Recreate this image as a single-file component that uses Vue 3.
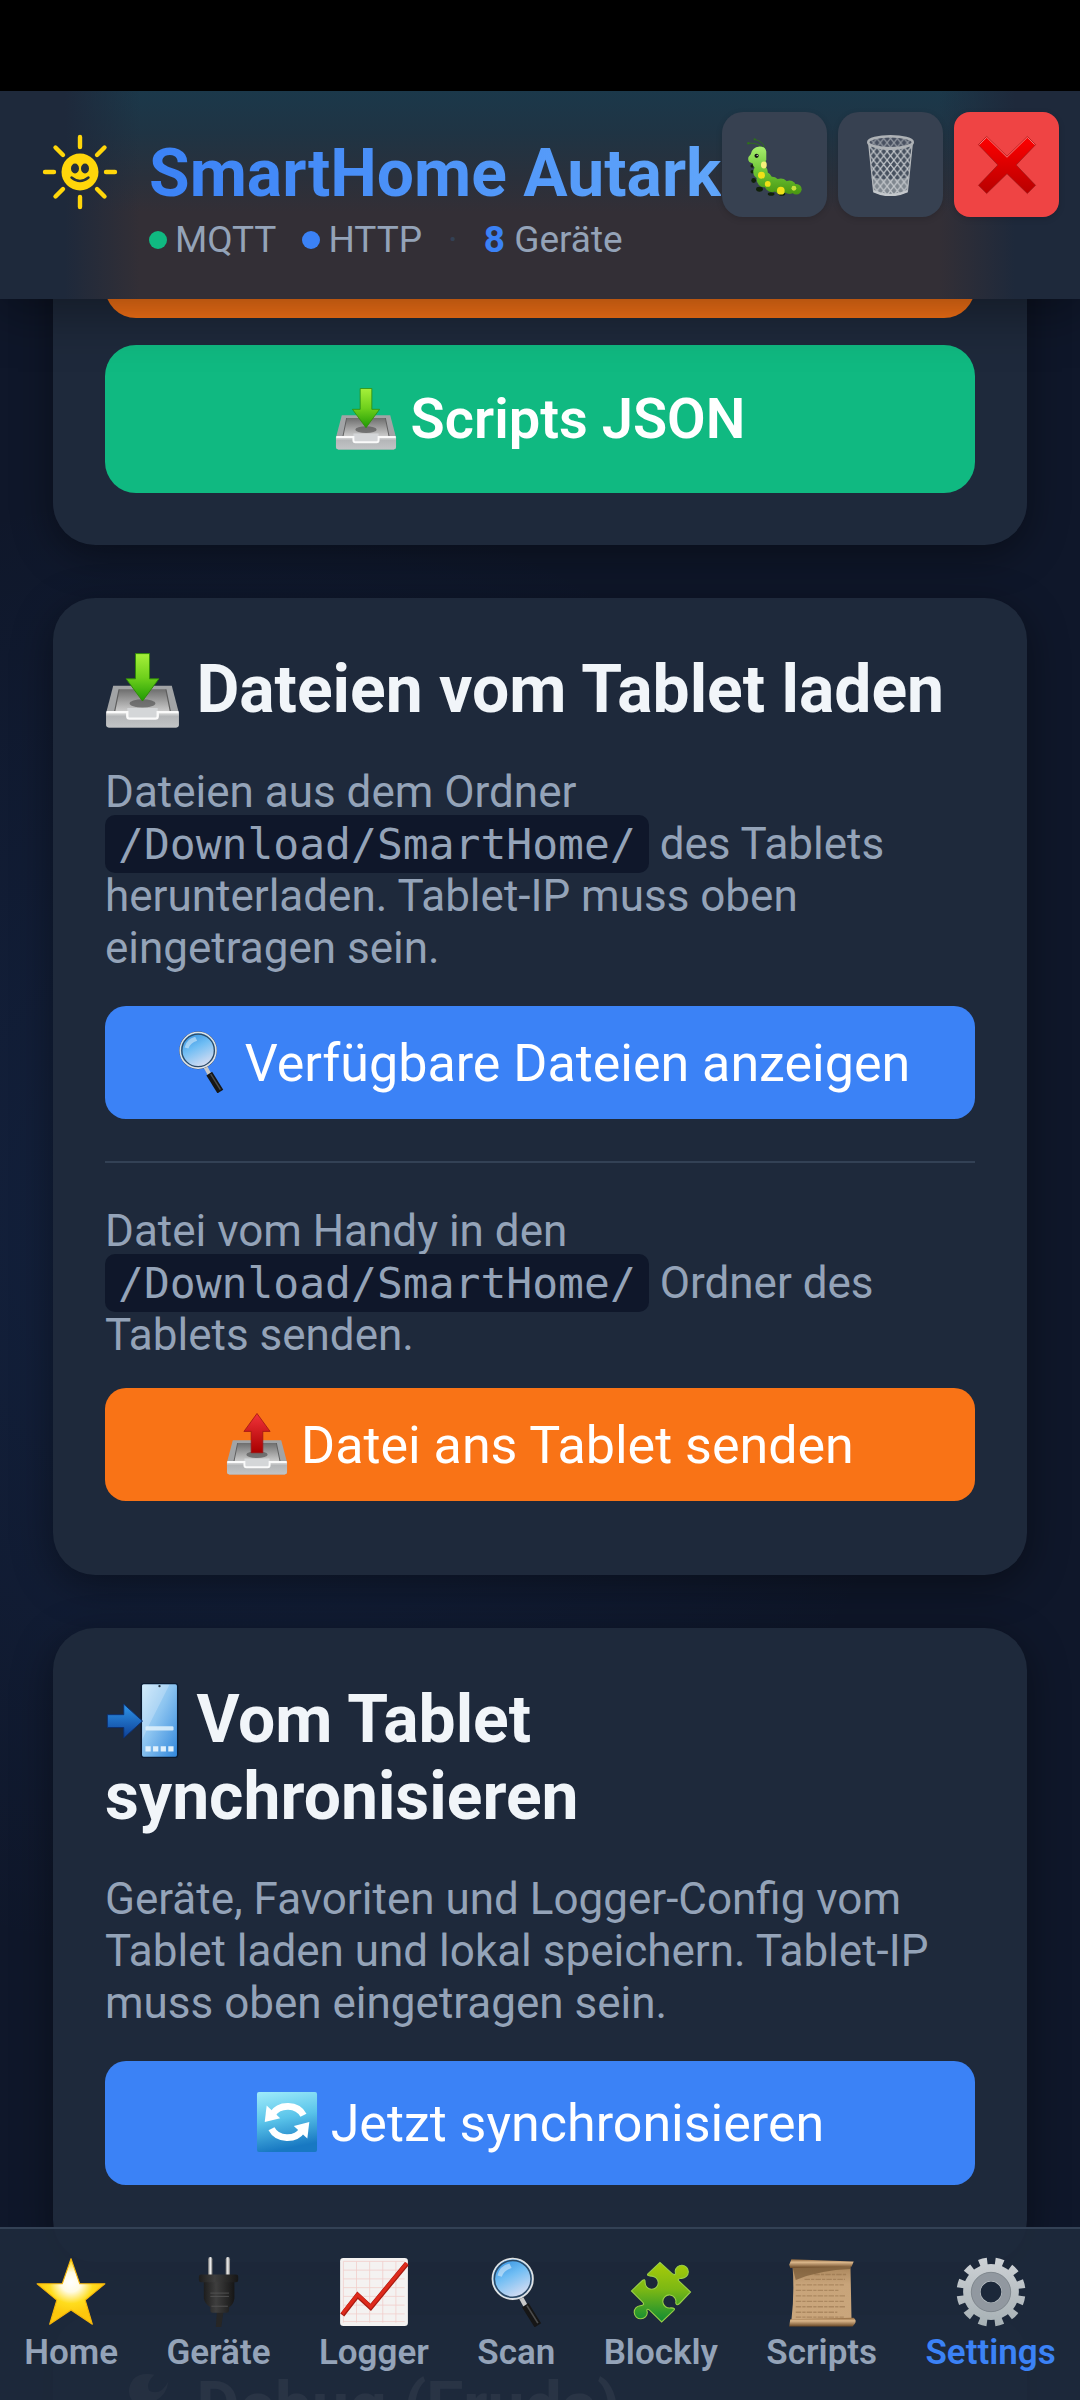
<template>
  <div class="app">
    <svg class="sprite" width="0" height="0" aria-hidden="true">
      <defs>
        <linearGradient id="g-green" x1="0" y1="0" x2="0" y2="1">
          <stop offset="0" stop-color="#a6f03a" />
          <stop offset="0.5" stop-color="#6fd01c" />
          <stop offset="1" stop-color="#1f9a05" />
        </linearGradient>
        <linearGradient id="g-red" x1="0" y1="0" x2="0" y2="1">
          <stop offset="0" stop-color="#f2343a" />
          <stop offset="1" stop-color="#a80000" />
        </linearGradient>
        <linearGradient id="g-cross" x1="0" y1="0" x2="0" y2="1">
          <stop offset="0" stop-color="#ff0000" />
          <stop offset="1" stop-color="#b80000" />
        </linearGradient>
        <linearGradient id="g-front" x1="0" y1="0" x2="0" y2="1">
          <stop offset="0" stop-color="#e8e8e8" />
          <stop offset="0.3" stop-color="#b4b6b8" />
          <stop offset="1" stop-color="#c2c4c6" />
        </linearGradient>
        <linearGradient id="g-inner" x1="0" y1="0" x2="0" y2="1">
          <stop offset="0" stop-color="#6e6e6e" />
          <stop offset="1" stop-color="#d2d2d2" />
        </linearGradient>
        <linearGradient id="g-lens" x1="0" y1="0" x2="0.5" y2="1">
          <stop offset="0" stop-color="#2486dc" />
          <stop offset="0.5" stop-color="#6fbdf4" />
          <stop offset="1" stop-color="#d3dcf2" />
        </linearGradient>
        <linearGradient id="g-phone" x1="0" y1="0" x2="1" y2="1">
          <stop offset="0" stop-color="#c8e6fa" />
          <stop offset="0.45" stop-color="#8cc4f0" />
          <stop offset="1" stop-color="#2f86dc" />
        </linearGradient>
        <linearGradient id="g-arrow" x1="0" y1="0" x2="0" y2="1">
          <stop offset="0" stop-color="#2f96ea" />
          <stop offset="1" stop-color="#0d3f96" />
        </linearGradient>
        <linearGradient id="g-sync" x1="0" y1="0" x2="0.2" y2="1">
          <stop offset="0" stop-color="#a0ecfa" />
          <stop offset="0.5" stop-color="#5ac4ea" />
          <stop offset="1" stop-color="#1878c2" />
        </linearGradient>
        <radialGradient id="g-star" cx="0.5" cy="0.36" r="0.5">
          <stop offset="0" stop-color="#ffffff" />
          <stop offset="0.3" stop-color="#fffbe4" />
          <stop offset="0.65" stop-color="#ffdd1e" />
          <stop offset="1" stop-color="#fdc70c" />
        </radialGradient>
        <linearGradient id="g-plug" x1="0" y1="0" x2="1" y2="0">
          <stop offset="0" stop-color="#1d1d1d" />
          <stop offset="0.4" stop-color="#3e3e3e" />
          <stop offset="1" stop-color="#161616" />
        </linearGradient>
        <linearGradient id="g-metal" x1="0" y1="0" x2="1" y2="0">
          <stop offset="0" stop-color="#7a7a7a" />
          <stop offset="0.5" stop-color="#f4f4f4" />
          <stop offset="1" stop-color="#6a6a6a" />
        </linearGradient>
        <linearGradient id="g-puzzle" x1="0.5" y1="0" x2="0.5" y2="1">
          <stop offset="0" stop-color="#a8cc08" />
          <stop offset="0.45" stop-color="#7cb814" />
          <stop offset="1" stop-color="#0f8c34" />
        </linearGradient>
        <linearGradient id="g-paper" x1="0" y1="0" x2="0" y2="1">
          <stop offset="0" stop-color="#a8845a" />
          <stop offset="0.35" stop-color="#c8a47a" />
          <stop offset="1" stop-color="#caa67c" />
        </linearGradient>
        <linearGradient id="g-roll" x1="0" y1="0" x2="0" y2="1">
          <stop offset="0" stop-color="#8a6238" />
          <stop offset="0.35" stop-color="#dcb88c" />
          <stop offset="1" stop-color="#6a4826" />
        </linearGradient>
        <linearGradient id="g-gear" gradientUnits="userSpaceOnUse" x1="0" y1="0" x2="0" y2="64">
          <stop offset="0" stop-color="#ced2d6" />
          <stop offset="1" stop-color="#a6b0b4" />
        </linearGradient>
        <linearGradient id="g-bug" gradientUnits="userSpaceOnUse" x1="0" y1="14" x2="0" y2="64">
          <stop offset="0" stop-color="#a6ec6c" />
          <stop offset="0.5" stop-color="#6cc434" />
          <stop offset="1" stop-color="#46920e" />
        </linearGradient>
        <pattern id="p-mesh" width="7" height="9" patternUnits="userSpaceOnUse">
          <path d="M0 0L7 9M7 0L0 9" stroke="#c4c8cc" stroke-width="1.3" />
        </pattern>
      </defs>

      <symbol id="tray" viewBox="0 0 64 64">
        <path d="M7 28H57L63 51V61Q63 63.500 60.500 63.500H3.500Q1 63.500 1 61V51Z" fill="#a2a4a6" />
        <path d="M12 31H52L56 51H8Z" fill="url(#g-inner)" />
        <path d="M12 31L8 51M52 31L56 51" stroke="#5e5e5e" stroke-width="1" />
        <ellipse cx="32" cy="43" rx="11" ry="3.500" fill="#555" opacity="0.7" />
        <path d="M1 50H19V54Q19 56 21 56H43Q45 56 45 54V50H63V61Q63 63.500 60.500 63.500H3.500Q1 63.500 1 61Z" fill="url(#g-front)" />
        <path d="M19 47H45V54Q45 56 43 56H21Q19 56 19 54Z" fill="#d4d6d8" />
        <path d="M1.500 50.500H19V54Q19 56 21 56H43Q45 56 45 54V50.500H62.500" fill="none" stroke="#fafafa" stroke-width="2" />
      </symbol>
      <symbol id="inbox" viewBox="0 0 64 64">
        <use href="#tray" />
        <path d="M26 0.500H38V22H46L32 41L18 22H26Z" fill="url(#g-green)" stroke="#2f8a08" stroke-width="0.8" />
      </symbol>
      <symbol id="outbox" viewBox="0 0 64 64">
        <use href="#tray" />
        <path d="M32 0.500L45.500 19H38V41H26V19H18.500Z" fill="url(#g-red)" stroke="#9c1414" stroke-width="0.8" />
      </symbol>
      <symbol id="search" viewBox="0 0 64 64">
        <path d="M36 36L42 47" stroke="#c8c8c8" stroke-width="4" />
        <path d="M40.500 44L52 62.500" stroke="#161616" stroke-width="7" />
        <path d="M42 44.500L52 60.500" stroke="#4c4c4c" stroke-width="1.500" />
        <circle cx="29" cy="20" r="19.500" fill="#3c4248" />
        <circle cx="29" cy="20" r="18.500" fill="url(#g-lens)" stroke="#dfe3e6" stroke-width="1.500" />
        <circle cx="29" cy="20" r="16.800" fill="none" stroke="#2c4a66" stroke-width="1.400" />
        <path d="M15 17Q17 8 26 6L28 10Q21 12 19 18Z" fill="#fff" opacity="0.45" />
      </symbol>
      <symbol id="phone" viewBox="0 0 64 64">
        <rect x="31" y="0.500" width="31" height="63" rx="2" fill="url(#g-phone)" stroke="#0b1a30" stroke-width="1.200" />
        <path d="M32 1.500H55L38 35L32 48Z" fill="#fff" opacity="0.22" />
        <circle cx="46.500" cy="2.600" r="1" fill="#234" />
        <rect x="34.500" y="37" width="24" height="3.500" rx="1" fill="#e2f2fc" opacity="0.85" />
        <path d="M34.500 54h4.500v4.500h-4.500zM41 54h4.500v4.500h-4.500zM47.500 54h4.500v4.500h-4.500zM54 54h4.500v4.500h-4.500z" fill="#dff0fc" />
        <path d="M2 27H16V18L32 32.500L16 47V38H2Z" fill="url(#g-arrow)" stroke="#0c2f70" stroke-width="0.8" />
      </symbol>
      <symbol id="sync" viewBox="0 0 64 64">
        <rect x="1" y="1" width="62" height="62" rx="2" fill="url(#g-sync)" />
        <g fill="none" stroke="#fff" stroke-width="7">
          <path d="M49 25A18 16 0 0 0 17 24" />
          <path d="M16 39A18 16 0 0 0 48 40" />
        </g>
        <path d="M11 15L9 32L25 28Z" fill="#fff" />
        <path d="M53 49L55 32L39 36Z" fill="#fff" />
      </symbol>
      <symbol id="bug" viewBox="0 0 64 64">
        <g fill="none" stroke="#2f6e1c" stroke-width="1">
          <path d="M21 14Q20 8 11 5.500" />
          <path d="M19 14Q15 9 4 9.500" />
        </g>
        <circle cx="11" cy="5.500" r="1.200" fill="#2f6e1c" />
        <circle cx="4.500" cy="9.500" r="1.300" fill="#2f6e1c" />
        <g fill="#10200a">
          <circle cx="8.500" cy="33" r="1.800" />
          <circle cx="8.500" cy="39" r="1.800" />
          <circle cx="10" cy="48" r="2.500" />
          <ellipse cx="16" cy="57" rx="3.500" ry="2.500" />
          <ellipse cx="28" cy="62" rx="3.500" ry="1.800" />
          <ellipse cx="39" cy="62" rx="3.500" ry="1.800" />
        </g>
        <g fill="url(#g-bug)">
          <circle cx="54" cy="57" r="5.500" />
          <circle cx="47" cy="55" r="7" />
          <circle cx="38" cy="54" r="8" />
          <circle cx="29" cy="52" r="8" />
          <circle cx="21" cy="47" r="8" />
          <circle cx="17" cy="39" r="7.500" />
          <circle cx="16" cy="30" r="7" />
          <path d="M23 18Q22 13 16 13Q8 14 7 21Q2.500 25 5.500 29Q10 32 16 30L23 27Z" />
        </g>
        <circle cx="13" cy="22.500" r="2.200" fill="#111" />
        <circle cx="13.600" cy="22" r="0.700" fill="#fff" />
        <g fill="#f0e018">
          <ellipse cx="20.500" cy="32" rx="3" ry="3.500" fill="#f6f07a" />
          <circle cx="18" cy="42.500" r="3.600" />
          <circle cx="24.500" cy="51.500" r="3" />
          <circle cx="38" cy="58.500" r="4" />
          <circle cx="51.500" cy="56" r="2.500" fill="#c8e03c" />
        </g>
      </symbol>
      <symbol id="bin" viewBox="0 0 64 64">
        <path d="M9 10L14 59Q31 67 49 59L54 10Z" fill="#8c949c" opacity="0.18" />
        <path d="M12 44L14 59Q31 67 49 59L51 44Q31 50 12 44Z" fill="#c6cacc" opacity="0.45" />
        <path d="M9 10L14 59Q31 67 49 59L54 10Q31 22 9 10Z" fill="url(#p-mesh)" stroke="#b4b8bc" stroke-width="1.200" />
        <ellipse cx="31.500" cy="8.500" rx="23" ry="6.200" fill="#485060" />
        <ellipse cx="31.500" cy="8.500" rx="23" ry="6.200" fill="url(#p-mesh)" opacity="0.6" />
        <ellipse cx="31.500" cy="8.500" rx="23" ry="6.200" fill="none" stroke="#aeb2b6" stroke-width="2.600" />
        <path d="M14 59Q31 67 49 59" fill="none" stroke="#c4c8cc" stroke-width="2.600" />
      </symbol>
      <symbol id="cross" viewBox="0 0 64 64">
        <path d="M11 2.500L32 23L53 2.500L61.500 11L41.500 32L61.500 53L53 61.500L32 41L11 61.500L2.500 53L22.500 32L2.500 11Z" fill="url(#g-cross)" stroke="#8e1a1a" stroke-width="0.600" />
        <path d="M3.500 11L11 3.500L32 24L53 3.500L60.500 11" fill="none" stroke="#ff9a9a" stroke-width="0.800" />
      </symbol>
      <symbol id="star" viewBox="0 0 64 64">
        <path d="M32 1.500L40 24.500H63L45 39.500L51.500 61.500L32 48.500L12.500 61.500L19 39.500L1 24.500H24Z" fill="url(#g-star)" stroke="#f6b60a" stroke-width="1" stroke-linejoin="round" />
      </symbol>
      <symbol id="plug" viewBox="0 0 64 64">
        <rect x="23" y="0" width="4" height="19" rx="2" fill="url(#g-metal)" />
        <rect x="39" y="0" width="4" height="19" rx="2" fill="url(#g-metal)" />
        <path d="M31 50H37L35 64H30Z" fill="#262626" />
        <path d="M19 22H47V38Q46 44 42 46V49Q42 51 40 51H27Q25 51 25 49V46Q20 43 19 38Z" fill="url(#g-plug)" />
        <rect x="14.500" y="16" width="36" height="7" rx="2" fill="url(#g-plug)" />
        <path d="M25 33H42M25 36H42M26 45H41" stroke="#555" stroke-width="0.800" />
      </symbol>
      <symbol id="chart" viewBox="0 0 64 64">
        <rect x="1" y="1" width="62" height="62" rx="3" fill="#f4f2f1" />
        <path d="M4 4H60M4 12H60M4 20H60M4 28H60M4 36H60M4 44H60M4 52H60M4 59H60M4 4V60M16 4V60M28 4V60M40 4V60M52 4V60" stroke="#f0cdc9" stroke-width="0.700" />
        <path d="M3 53L17 35L29 46L62 6" fill="none" stroke="#a81a10" stroke-width="4.600" />
        <path d="M3 52L17 34.500L29 45.500L62 5.500" fill="none" stroke="#de2a1c" stroke-width="3" />
      </symbol>
      <symbol id="puzzle" viewBox="0 0 64 64">
        <path d="M31 5L42 15Q46 18 45 13A6 6 0 1 1 51 19.500Q46 20 48.500 22L59 32L49 42.500Q46 45 45.500 42A6 6 0 1 0 41 46.500Q46 46.500 43.500 49L32.600 59.400L22 49Q18 46 19.500 50.500A6 6 0 1 1 13 44.500Q18 44 15 41L5 31L15 21.500Q17.500 19.500 17.500 23A6 6 0 1 0 23 17.500Q18.500 17 20 15.500Z" fill="url(#g-puzzle)" stroke="#9ad048" stroke-width="1" />
      </symbol>
      <symbol id="scroll" viewBox="0 0 64 64">
        <path d="M5 7H58L59 58H4Q7 34 5 7Z" fill="url(#g-paper)" />
        <path d="M5 9H58V11Q30 12 8 21Z" fill="#5e4222" opacity="0.5" />
        <path d="M25 16H54M16 20.500H53M8 25.500H52M8 30.500H48M8 35.500H53M8 40.500H52M8 45.500H54M8 50.500H46M8 55H52" stroke="#8f6c46" stroke-width="1.200" stroke-dasharray="5 1 3 1" opacity="0.5" />
        <path d="M4 2L61 4L59 9L3 10L2 7Z" fill="url(#g-roll)" />
        <path d="M3 57L61 55.500Q64 58 62 61L60 63.500H2Z" fill="url(#g-roll)" />
      </symbol>
      <symbol id="gear" viewBox="0 0 64 64">
        <circle cx="32" cy="32" r="27.500" fill="none" stroke="url(#g-gear)" stroke-width="8" stroke-dasharray="7.200 7.200" stroke-dashoffset="-3.600" />
        <circle cx="32" cy="32" r="17.500" fill="none" stroke="url(#g-gear)" stroke-width="16" />
        <circle cx="32" cy="32" r="14" fill="none" stroke="#9198a0" stroke-width="8" />
        <circle cx="32" cy="32" r="18" fill="none" stroke="#7c848a" stroke-width="0.800" />
      </symbol>
      <symbol id="wrench" viewBox="0 0 64 64">
        <path d="M24 8Q16 20 26 29L42 64H54L38 28Q52 24 54 10Q48 22 38 18Q34 12 42 4Q30 2 24 8Z" fill="#aab0b6" />
      </symbol>
    </svg>

    <div class="status-bar"></div>

    <header class="header">
      <svg class="logo" viewBox="0 0 76 76" aria-hidden="true">
        <g stroke="#ffd60a" stroke-width="4.400" stroke-linecap="round">
          <path d="M38 3V13M38 63V73M3 38H12M64 38H73M13.500 13.500L21 21M55 55L62.500 62.500M62.500 13.500L55 21M21 55L13.500 62.500" />
        </g>
        <circle cx="38" cy="38" r="18.500" fill="#ffd60a" />
        <ellipse cx="33" cy="34.500" rx="4" ry="5" fill="#25303c" />
        <ellipse cx="43" cy="34.500" rx="4" ry="5" fill="#25303c" />
        <path d="M29.500 43.500Q38 50.500 46.500 43.500" fill="none" stroke="#25303c" stroke-width="2.400" stroke-linecap="round" />
      </svg>
      <div class="brand">
        <h1>SmartHome Autark</h1>
        <div class="status">
          <span class="state"><i class="dot mqtt"></i>MQTT</span>
          <span class="state"><i class="dot http"></i>HTTP</span>
          <span class="sep">·</span>
          <span><b>8</b> Geräte</span>
        </div>
      </div>
      <div class="header-actions">
        <button
          v-for="action in actions"
          :key="action.icon"
          type="button"
          class="icon-btn"
          :class="{ danger: action.danger }"
        >
          <svg><use :href="'#' + action.icon" /></svg>
        </button>
      </div>
    </header>

    <main class="content">
      <section class="card scrolled">
        <button type="button" class="btn big orange"></button>
        <button type="button" class="btn big green">
          <svg><use href="#inbox" /></svg> Scripts JSON
        </button>
      </section>

      <section class="card">
        <h2><svg><use href="#inbox" /></svg> Dateien vom Tablet laden</h2>
        <p>
          Dateien aus dem Ordner <code>/Download/SmartHome/</code> des Tablets
          herunterladen. Tablet-IP muss oben eingetragen sein.
        </p>
        <button type="button" class="btn blue">
          <svg><use href="#search" /></svg> Verfügbare Dateien anzeigen
        </button>
        <hr />
        <p class="tight">
          Datei vom Handy in den <code>/Download/SmartHome/</code> Ordner des
          Tablets senden.
        </p>
        <button type="button" class="btn orange last">
          <svg><use href="#outbox" /></svg> Datei ans Tablet senden
        </button>
      </section>

      <section class="card">
        <h2><svg><use href="#phone" /></svg> Vom Tablet synchronisieren</h2>
        <p>
          Geräte, Favoriten und Logger-Config vom Tablet laden und lokal
          speichern. Tablet-IP muss oben eingetragen sein.
        </p>
        <button type="button" class="btn blue tall">
          <svg><use href="#sync" /></svg> Jetzt synchronisieren
        </button>
      </section>

      <section class="card">
        <h2><svg><use href="#wrench" /></svg> Debug (Eruda)</h2>
      </section>
    </main>

    <nav class="tabs">
      <a
        v-for="tab in tabs"
        :key="tab.label"
        href="#"
        :class="{ active: activeTab === tab.label }"
        @click.prevent="activeTab = tab.label"
      >
        <svg><use :href="'#' + tab.icon" /></svg>
        {{ tab.label }}
      </a>
    </nav>
  </div>
</template>

<script setup>
import { ref } from 'vue';

const actions = [
  { icon: 'bug' },
  { icon: 'bin' },
  { icon: 'cross', danger: true },
];

const tabs = [
  { label: 'Home', icon: 'star' },
  { label: 'Geräte', icon: 'plug' },
  { label: 'Logger', icon: 'chart' },
  { label: 'Scan', icon: 'search' },
  { label: 'Blockly', icon: 'puzzle' },
  { label: 'Scripts', icon: 'scroll' },
  { label: 'Settings', icon: 'gear' },
];

const activeTab = ref('Settings');
</script>

<style>
body {
  margin: 0;
  background: #0f172a;
}
</style>

<style scoped>
.app {
  position: relative;
  display: flex;
  flex-direction: column;
  height: 100vh;
  overflow: hidden;
  color: #f1f5f9;
  font-family: Roboto, "Noto Sans", sans-serif;
  background:
    radial-gradient(circle at 20% 51%, rgba(59, 130, 246, 0.1), transparent 50%),
    #0f172a;
}

.sprite {
  position: absolute;
}

button {
  border: none;
  padding: 0;
  font-family: inherit;
  color: #fff;
  cursor: pointer;
}

.status-bar {
  flex: none;
  height: 91px;
  background: #000;
}

.header {
  position: relative;
  z-index: 10;
  flex: none;
  display: flex;
  gap: 31px;
  padding: 43px 42px 38px;
  background:
    linear-gradient(90deg, #1e293b 6%, transparent 13%, transparent 87%, #1e293b 94%),
    linear-gradient(180deg, #1b384a 0%, #1f3444 20%, #2a303b 42%, #332f36 58%, #332f36 100%);
  box-shadow: 0 10px 52px rgba(0, 0, 0, 0.4);
}

.logo {
  flex: none;
  width: 76px;
  height: 76px;
}

.brand {
  padding-top: 2px;
}

h1 {
  margin: 0 0 8px;
  font-size: 66px;
  line-height: 75px;
  font-weight: 700;
  white-space: nowrap;
  background: linear-gradient(90deg, #3b82f6, #60a5fa);
  background-clip: text;
  -webkit-background-clip: text;
  color: transparent;
}

.status {
  display: flex;
  align-items: center;
  gap: 26px;
  font-size: 37px;
  line-height: 42px;
  color: #94a3b8;
}

.state {
  display: flex;
  align-items: center;
  gap: 8px;
}

.dot {
  width: 18px;
  height: 18px;
  border-radius: 50%;
}

.dot.mqtt {
  background: #10b981;
}

.dot.http {
  background: #3b82f6;
}

.sep {
  color: #334155;
}

.status b {
  color: #3b82f6;
}

.header-actions {
  position: absolute;
  top: 21px;
  right: 21px;
  display: flex;
  gap: 11px;
}

.icon-btn {
  display: flex;
  align-items: center;
  justify-content: center;
  width: 105px;
  height: 105px;
  border-radius: 21px;
  background: #374151;
  box-shadow: 0 2px 6px rgba(0, 0, 0, 0.15);
}

.icon-btn.danger {
  border-radius: 16px;
  background: #ef4444;
}

.icon-btn svg {
  width: 62px;
  height: 62px;
}

.content {
  flex: 1;
  min-height: 0;
  overflow: hidden;
  padding: 0 53px;
}

.card {
  margin-bottom: 53px;
  padding: 53px 52px;
  border-radius: 42px;
  background: #1e293b;
  box-shadow: 0 10px 40px rgba(0, 0, 0, 0.4);
}

/* Erste Karte ist unter den Header gescrollt */
.card.scrolled {
  margin-top: -182px;
  padding-bottom: 52px;
}

h2 {
  margin: 0 0 38px;
  font-size: 66px;
  line-height: 77px;
  font-weight: 700;
}

h2 svg {
  width: 75px;
  height: 75px;
  margin: -10px 0;
  vertical-align: -6px;
}

p {
  margin: 0 0 32px;
  font-size: 44px;
  line-height: 52px;
  color: #94a3b8;
}

p.tight {
  margin-bottom: 27px;
}

code {
  padding: 4px 13px;
  border-radius: 10px;
  background: #0f172a;
  font-family: "Droid Sans Mono", "DejaVu Sans Mono", monospace;
  font-size: 43px;
  line-height: 40px;
}

hr {
  margin: 42px 0;
  border: none;
  border-top: 2px solid #334155;
}

.btn {
  display: block;
  width: 100%;
  height: 113px;
  border-radius: 21px;
  font-size: 52px;
  line-height: 62px;
}

.btn svg {
  width: 62px;
  height: 62px;
  vertical-align: -12px;
}

.btn.tall {
  height: 124px;
  margin-bottom: 24px;
}

.btn.big {
  height: 148px;
  border-radius: 31px;
  font-size: 56px;
  font-weight: 600;
}

.btn.big + .btn.big {
  margin-top: 27px;
}

.btn.last {
  margin-bottom: 21px;
}

.btn.blue {
  background: #3b82f6;
}

.btn.orange {
  background: #f97316;
}

.btn.green {
  background: #10b981;
}

.tabs {
  position: absolute;
  left: 0;
  right: 0;
  bottom: 0;
  z-index: 10;
  display: flex;
  justify-content: space-around;
  padding: 28px 0 26px;
  border-top: 2px solid #334155;
  background: rgba(30, 41, 59, 0.95);
}

.tabs a {
  display: flex;
  flex-direction: column;
  align-items: center;
  gap: 5px;
  font-size: 35px;
  line-height: 42px;
  font-weight: 600;
  color: #94a3b8;
  text-decoration: none;
}

.tabs a.active {
  color: #3b82f6;
}

.tabs svg {
  width: 70px;
  height: 70px;
}
</style>
